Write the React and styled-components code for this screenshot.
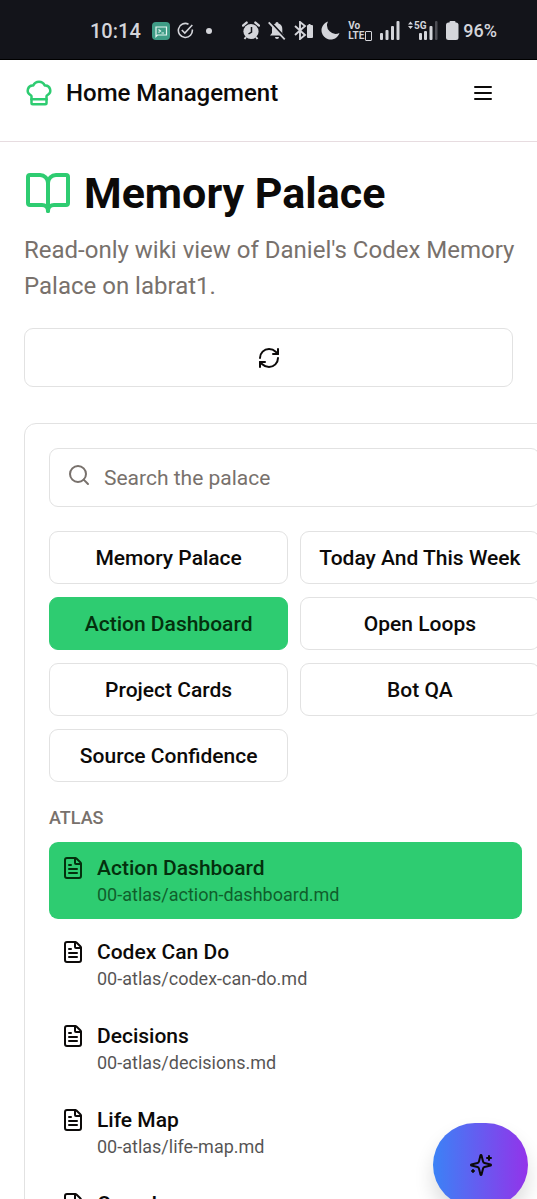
import React, { useState } from 'react';
import styled, { createGlobalStyle } from 'styled-components';
import { BookOpen, ChefHat, FileText, RefreshCw, Search } from 'lucide-react';

const GlobalStyle = createGlobalStyle`
  * {
    box-sizing: border-box;
  }

  html {
    scrollbar-width: none;
  }

  body {
    margin: 0;
    background-color: #ffffff;
    color: #0c0a09;
    font-family: Roboto, 'Liberation Sans', sans-serif;
  }

  button,
  input {
    font-family: inherit;
    color: inherit;
  }
`;

const Page = styled.div`
  min-height: 100vh;
  overflow-x: clip;
`;

const StatusBar = styled.div`
  display: flex;
  justify-content: space-between;
  align-items: center;
  height: 60px;
  padding: 2px 40px 0 90px;
  background-color: #13141a;
  border-bottom: 1px solid #000000;
  color: #d4d5da;
  font-size: 20px;
  font-weight: 500;
`;

const StatusGroup = styled.div`
  display: flex;
  align-items: center;
  gap: ${(props) => props.$gap}px;

  svg {
    display: block;
  }
`;

const Clock = styled.span`
  margin-right: 4px;
`;

const Dot = styled.span`
  width: 6px;
  height: 6px;
  margin-left: 5px;
  border-radius: 50%;
  background-color: currentColor;
`;

const TinyLabel = styled.span`
  display: flex;
  flex-direction: column;
  font-size: 10px;
  font-weight: 700;
  line-height: 10px;
`;

const LteRow = styled.span`
  display: flex;
  align-items: center;
  gap: 1px;

  &::after {
    content: '';
    width: 5px;
    height: 8px;
    border: 1px solid currentColor;
    border-radius: 1px;
  }
`;

const Battery = styled.span`
  display: flex;
  align-items: center;
  gap: 4px;
  font-size: 18px;
`;

const Header = styled.header`
  display: flex;
  justify-content: space-between;
  align-items: center;
  padding: 18px 42px 33px 24px;
  border-bottom: 1px solid #e7dce0;
`;

const Brand = styled.a`
  display: flex;
  align-items: center;
  gap: 12px;
  color: inherit;
  font-size: 24px;
  font-weight: 500;
  line-height: 30px;
  text-decoration: none;
`;

const MenuButton = styled.button`
  display: flex;
  padding: 0;
  border: none;
  background: none;
  cursor: pointer;
`;

const Main = styled.main`
  padding: 24px;
`;

const Title = styled.h1`
  display: flex;
  align-items: center;
  gap: 12px;
  margin: 0 0 12px;
  font-size: 43px;
  font-weight: 700;
  line-height: 54px;
`;

const Description = styled.p`
  margin: 0 -12px 24px 0;
  color: #78716c;
  font-size: 24px;
  line-height: 36px;
`;

const RefreshButton = styled.button`
  display: flex;
  justify-content: center;
  align-items: center;
  width: 100%;
  height: 59px;
  margin-bottom: 36px;
  border: 1px solid #e2e2e2;
  border-radius: 9px;
  background-color: #ffffff;
  cursor: pointer;
`;

const Card = styled.section`
  width: max-content;
  min-width: 100%;
  padding: 24px;
  border: 1px solid #e2e2e2;
  border-radius: 12px;
`;

const SearchBox = styled.label`
  position: relative;
  display: block;
  margin-bottom: 24px;
  color: #78716c;

  svg {
    position: absolute;
    top: 15px;
    left: 18px;
  }
`;

const SearchInput = styled.input`
  display: block;
  width: 100%;
  height: 59px;
  padding: 0 18px 0 54px;
  border: 1px solid #e2e2e2;
  border-radius: 9px;
  background-color: transparent;
  font-size: 21px;

  &::placeholder {
    color: #78716c;
    opacity: 1;
  }
`;

const Shortcuts = styled.div`
  display: grid;
  grid-template-columns: 1fr 1fr;
  gap: 13px 12px;
  margin-bottom: 24px;
`;

const Shortcut = styled.button`
  height: 53px;
  padding: 0 18px;
  border: 1px solid ${(props) => (props.$active ? '#2ecc71' : '#e2e2e2')};
  border-radius: 9px;
  background-color: ${(props) => (props.$active ? '#2ecc71' : '#ffffff')};
  color: ${(props) => (props.$active ? '#04300d' : '#0c0a09')};
  font-size: 21px;
  font-weight: 500;
  white-space: nowrap;
  cursor: pointer;
`;

const SectionTitle = styled.h2`
  margin: 0 0 12px;
  color: #78716c;
  font-size: 18px;
  font-weight: 500;
  line-height: 24px;
`;

const NoteList = styled.ul`
  display: flex;
  flex-direction: column;
  gap: 7px;
  margin: 0;
  padding: 0 18px 0 0;
  list-style: none;
`;

const NoteButton = styled.button`
  display: flex;
  gap: 12px;
  width: 100%;
  padding: 11px 12px 12px;
  border: none;
  border-radius: 9px;
  background-color: ${(props) => (props.$active ? '#2ecc71' : 'transparent')};
  color: ${(props) => (props.$active ? '#04300d' : '#0c0a09')};
  text-align: left;
  cursor: pointer;

  svg {
    margin-top: 3px;
  }
`;

const NoteName = styled.span`
  display: block;
  font-size: 21px;
  font-weight: 500;
  line-height: 30px;
`;

const NotePath = styled.span`
  display: block;
  font-size: 18px;
  line-height: 24px;
  opacity: 0.7;
`;

const AssistantButton = styled.button`
  position: fixed;
  right: 9px;
  bottom: -8px;
  display: flex;
  justify-content: center;
  align-items: center;
  width: 95px;
  height: 84px;
  border: none;
  border-radius: 42px;
  background-image: linear-gradient(90deg, #3b82f6, #9333ea);
  box-shadow: 0 12px 20px rgba(0, 0, 0, 0.14);
  cursor: pointer;
`;

const shortcuts = [
  'Memory Palace',
  'Today And This Week',
  'Action Dashboard',
  'Open Loops',
  'Project Cards',
  'Bot QA',
  'Source Confidence',
];

const notes = [
  { name: 'Action Dashboard', path: '00-atlas/action-dashboard.md' },
  { name: 'Codex Can Do', path: '00-atlas/codex-can-do.md' },
  { name: 'Decisions', path: '00-atlas/decisions.md' },
  { name: 'Life Map', path: '00-atlas/life-map.md' },
  { name: 'Open Loops', path: '00-atlas/open-loops.md' },
];

function TerminalIcon() {
  return (
    <svg width='18' height='18' viewBox='0 0 18 18' fill='none'>
      <rect width='18' height='18' rx='4' fill='#3f9c86' />
      <path
        d='M4 5h10.5v8H5.5L4 14.5zM6.5 7.5l2 1.5-2 1.5M9.5 11h2.5'
        stroke='#e4f5f0'
        strokeWidth='1.2'
      />
    </svg>
  );
}

function CheckIcon() {
  return (
    <svg width='17' height='17' viewBox='0 0 17 17' fill='none' stroke='currentColor' strokeWidth='1.6'>
      <path d='M11.5 2.2A7 7 0 1 0 15.3 7.5' />
      <path d='M4.8 8l3 3 7.5-8' />
    </svg>
  );
}

function AlarmIcon() {
  return (
    <svg width='18' height='19' viewBox='0 0 18 19' fill='none'>
      <circle cx='9' cy='10.5' r='7.6' fill='currentColor' />
      <path d='M1 4.6L4.6 1.6M17 4.6l-3.6-3' stroke='currentColor' strokeWidth='2.4' strokeLinecap='round' />
      <path d='M4 16l-1.5 2M14 16l1.5 2' stroke='currentColor' strokeWidth='2' />
      <path d='M9.5 6v5l-3 2' stroke='#13141a' strokeWidth='1.5' />
    </svg>
  );
}

function BellOffIcon() {
  return (
    <svg width='18' height='19' viewBox='0 0 18 19'>
      <path
        d='M9 1a1.5 1.5 0 0 1 1.5 1.6C13 3.3 14.3 5.3 14.3 8v4l2 2.5H2l2-2.5V8c0-2.7 1-4.7 3.5-5.4A1.5 1.5 0 0 1 9 1zM7 16h4a2 2 0 0 1-4 0z'
        fill='currentColor'
      />
      <path d='M2 .5l16 17' stroke='#13141a' strokeWidth='2' />
      <path d='M.7 1.3l16 17' stroke='currentColor' strokeWidth='1.8' />
    </svg>
  );
}

function BluetoothIcon() {
  return (
    <svg width='19' height='19' viewBox='0 0 19 19'>
      <path d='M1 5l10 9-5 4V1l5 4-10 9' fill='none' stroke='currentColor' strokeWidth='1.9' />
      <path d='M14.5 3h2v1h1.5q1 0 1 1v11q0 1-1 1h-4q-1 0-1-1V5q0-1 1-1h.5z' fill='currentColor' />
    </svg>
  );
}

function MoonIcon() {
  return (
    <svg width='19' height='19' viewBox='0 0 19 19'>
      <path d='M7 .5A9.2 9.2 0 1 0 18.5 12 8.6 8.6 0 0 1 7 .5z' fill='currentColor' />
    </svg>
  );
}

function VolteLabel() {
  return (
    <TinyLabel>
      <span>Vo</span>
      <LteRow>LTE</LteRow>
    </TinyLabel>
  );
}

function SignalIcon() {
  return (
    <svg width='20' height='19' viewBox='0 0 20 19' fill='currentColor'>
      <rect x='0' y='12' width='3' height='7' rx='1' />
      <rect x='5.5' y='9' width='3' height='10' rx='1' />
      <rect x='11' y='5' width='3' height='14' rx='1' />
      <rect x='16.5' y='0' width='3' height='19' rx='1' />
    </svg>
  );
}

function FiveGIcon() {
  return (
    <svg width='30' height='19' viewBox='0 0 30 19' fill='currentColor'>
      <path d='M0 3.5L2.5.5 5 3.5zM0 5l2.5 3L5 5z' />
      <text x='6' y='8' fontSize='10' fontWeight='700'>
        5G
      </text>
      <rect x='11' y='12' width='3' height='7' rx='1' />
      <rect x='16' y='10' width='3' height='9' rx='1' />
      <rect x='21.5' y='5' width='3' height='14' rx='1' />
      <rect x='27' y='0' width='2.5' height='19' rx='1' opacity='0.3' />
    </svg>
  );
}

function BatteryIcon() {
  return (
    <svg width='13' height='19' viewBox='0 0 13 19' fill='currentColor'>
      <rect x='3.5' y='0' width='6' height='4' rx='1' />
      <rect x='0' y='1.5' width='12.5' height='17.5' rx='2.5' />
    </svg>
  );
}

function MenuIcon() {
  return (
    <svg width='24' height='24' viewBox='0 0 24 24' stroke='currentColor' strokeWidth='2' strokeLinecap='round'>
      <path d='M4 6h16M4 12h16M4 18h16' />
    </svg>
  );
}

function SparklesIcon() {
  return (
    <svg
      width='24'
      height='24'
      viewBox='0 0 24 24'
      fill='none'
      stroke='currentColor'
      strokeWidth='2'
      strokeLinecap='round'
      strokeLinejoin='round'
    >
      <path d='M9.937 15.5A2 2 0 0 0 8.5 14.063l-6.135-1.582a.5.5 0 0 1 0-.962L8.5 9.936A2 2 0 0 0 9.937 8.5l1.582-6.135a.5.5 0 0 1 .963 0L14.063 8.5A2 2 0 0 0 15.5 9.937l6.135 1.581a.5.5 0 0 1 0 .964L15.5 14.063a2 2 0 0 0-1.437 1.437l-1.582 6.135a.5.5 0 0 1-.963 0z' />
      <path d='M20 3v4M22 5h-4M4 17v2M5 18H3' />
    </svg>
  );
}

function App() {
  const [current, setCurrent] = useState('Action Dashboard');
  const [query, setQuery] = useState('');

  const visibleNotes = notes.filter((note) =>
    note.name.toLowerCase().includes(query.toLowerCase())
  );

  return (
    <Page>
      <GlobalStyle />
      <StatusBar>
        <StatusGroup $gap={7}>
          <Clock>10:14</Clock>
          <TerminalIcon />
          <CheckIcon />
          <Dot />
        </StatusGroup>
        <StatusGroup $gap={8}>
          <AlarmIcon />
          <BellOffIcon />
          <BluetoothIcon />
          <MoonIcon />
          <VolteLabel />
          <SignalIcon />
          <FiveGIcon />
          <Battery>
            <BatteryIcon />
            96%
          </Battery>
        </StatusGroup>
      </StatusBar>

      <Header>
        <Brand href='#'>
          <ChefHat size={30} color='#2ecc71' />
          Home Management
        </Brand>
        <MenuButton type='button' aria-label='Menu'>
          <MenuIcon />
        </MenuButton>
      </Header>

      <Main>
        <Title>
          <BookOpen size={48} color='#2ecc71' />
          Memory Palace
        </Title>
        <Description>
          Read-only wiki view of Daniel's Codex Memory Palace on labrat1.
        </Description>
        <RefreshButton type='button' aria-label='Refresh'>
          <RefreshCw size={24} />
        </RefreshButton>

        <Card>
          <SearchBox>
            <Search size={24} />
            <SearchInput
              type='text'
              aria-label='Search the palace'
              placeholder='Search the palace'
              value={query}
              onChange={(e) => setQuery(e.target.value)}
            />
          </SearchBox>

          <Shortcuts>
            {shortcuts.map((name) => (
              <Shortcut
                key={name}
                type='button'
                $active={name === current}
                onClick={() => setCurrent(name)}
              >
                {name}
              </Shortcut>
            ))}
          </Shortcuts>

          <SectionTitle>ATLAS</SectionTitle>
          <NoteList>
            {visibleNotes.map((note) => (
              <li key={note.path}>
                <NoteButton
                  type='button'
                  $active={note.name === current}
                  onClick={() => setCurrent(note.name)}
                >
                  <FileText size={24} />
                  <span>
                    <NoteName>{note.name}</NoteName>
                    <NotePath>{note.path}</NotePath>
                  </span>
                </NoteButton>
              </li>
            ))}
          </NoteList>
        </Card>
      </Main>

      <AssistantButton type='button' aria-label='Open assistant'>
        <SparklesIcon />
      </AssistantButton>
    </Page>
  );
}

export default App;
